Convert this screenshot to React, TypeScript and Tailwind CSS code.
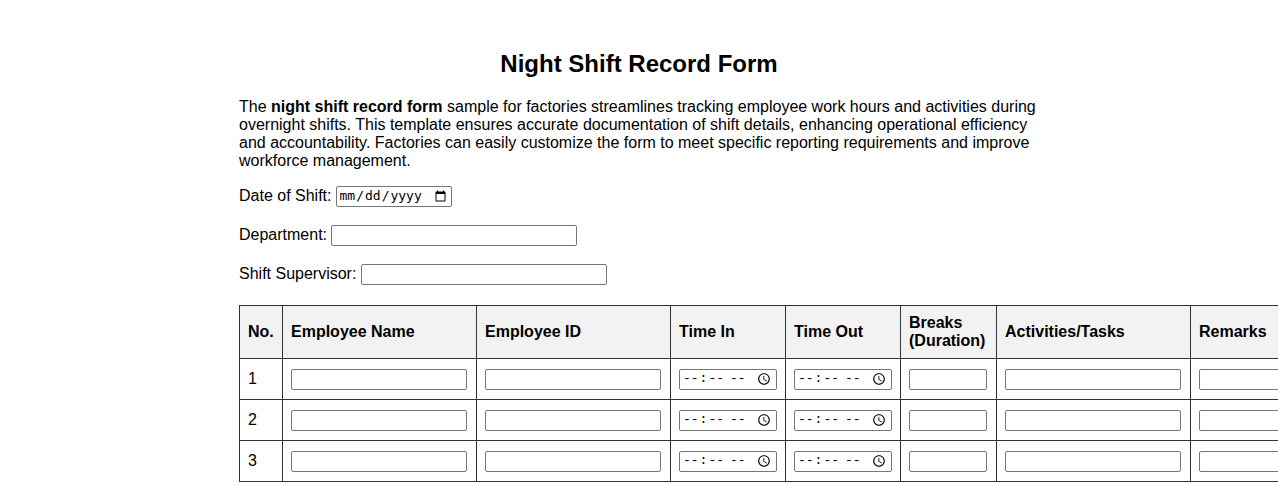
import React from 'react'

const columns = [
  { label: 'No.', width: 'w-[43px]' },
  { label: 'Employee Name', width: 'w-[194px]' },
  { label: 'Employee ID', width: 'w-[194px]' },
  { label: 'Time In', width: 'w-[115px]' },
  { label: 'Time Out', width: 'w-[115px]' },
  { label: 'Breaks (Duration)', width: 'w-[96px]' },
  { label: 'Activities/Tasks', width: 'w-[194px]' },
  { label: 'Remarks', width: 'w-[194px]' },
]

const inputBase =
  'h-[21px] border border-[#767676] rounded-[2px] bg-white px-[2px] text-[13px] text-black outline-none'

function TextBox({ width }: { width: string }) {
  return <input type="text" className={`${inputBase} ${width}`} />
}

function TimeBox() {
  return (
    <input
      type="time"
      className={`${inputBase} w-[98px] font-['Liberation_Mono',monospace] text-[11px]`}
    />
  )
}

export default function App() {
  return (
    <div className="w-full h-[486px] overflow-hidden bg-white text-black font-['Liberation_Sans',Arial,sans-serif]">
      <div className="w-[800px] mx-auto pt-[50px]">
        {/* Title */}
        <h1 className="text-[24px] leading-[28px] font-bold text-center mb-[20px]">
          Night Shift Record Form
        </h1>

        {/* Intro */}
        <p className="text-[16px] leading-[18px] mb-[14px]">
          The <strong className="font-bold">night shift record form</strong> sample for factories streamlines
          tracking employee work hours and activities during overnight shifts. This template ensures accurate
          documentation of shift details, enhancing operational efficiency and accountability. Factories can
          easily customize the form to meet specific reporting requirements and improve workforce management.
        </p>

        {/* Shift details */}
        <div className="flex flex-col gap-[15px] text-[16px] mb-[19px]">
          <div className="flex items-center h-[24px]">
            <label className="mr-[4px]">Date of Shift:</label>
            <input
              type="date"
              className={`${inputBase} w-[116px] font-['DejaVu_Sans_Mono',monospace] text-[12px]`}
            />
          </div>
          <div className="flex items-center h-[24px]">
            <label className="mr-[4px]">Department:</label>
            <TextBox width="w-[246px]" />
          </div>
          <div className="flex items-center h-[24px]">
            <label className="mr-[5px]">Shift Supervisor:</label>
            <TextBox width="w-[246px]" />
          </div>
        </div>

        {/* Record table */}
        <table className="table-fixed border-collapse w-[1146px] text-[16px] leading-[18px]">
          <thead>
            <tr>
              {columns.map((col) => (
                <th
                  key={col.label}
                  className={`${col.width} border border-[#333] bg-[#f2f2f2] px-[8px] py-[8px] text-left font-bold align-middle h-[53px]`}
                >
                  {col.label}
                </th>
              ))}
            </tr>
          </thead>
          <tbody>
            {[1, 2, 3].map((n) => (
              <tr key={n}>
                <td className="border border-[#333] px-[8px] py-[8px] h-[41px]">
                  <div className="flex items-center h-[24px]">{n}</div>
                </td>
                <td className="border border-[#333] px-[8px] py-[8px]">
                  <div className="flex items-center h-[24px]"><TextBox width="w-[176px]" /></div>
                </td>
                <td className="border border-[#333] px-[8px] py-[8px]">
                  <div className="flex items-center h-[24px]"><TextBox width="w-[176px]" /></div>
                </td>
                <td className="border border-[#333] px-[8px] py-[8px]">
                  <div className="flex items-center h-[24px]"><TimeBox /></div>
                </td>
                <td className="border border-[#333] px-[8px] py-[8px]">
                  <div className="flex items-center h-[24px]"><TimeBox /></div>
                </td>
                <td className="border border-[#333] px-[8px] py-[8px]">
                  <div className="flex items-center h-[24px]"><TextBox width="w-[78px]" /></div>
                </td>
                <td className="border border-[#333] px-[8px] py-[8px]">
                  <div className="flex items-center h-[24px]"><TextBox width="w-[176px]" /></div>
                </td>
                <td className="border border-[#333] px-[8px] py-[8px]">
                  <div className="flex items-center h-[24px]"><TextBox width="w-[176px]" /></div>
                </td>
              </tr>
            ))}
          </tbody>
        </table>
      </div>
    </div>
  )
}
